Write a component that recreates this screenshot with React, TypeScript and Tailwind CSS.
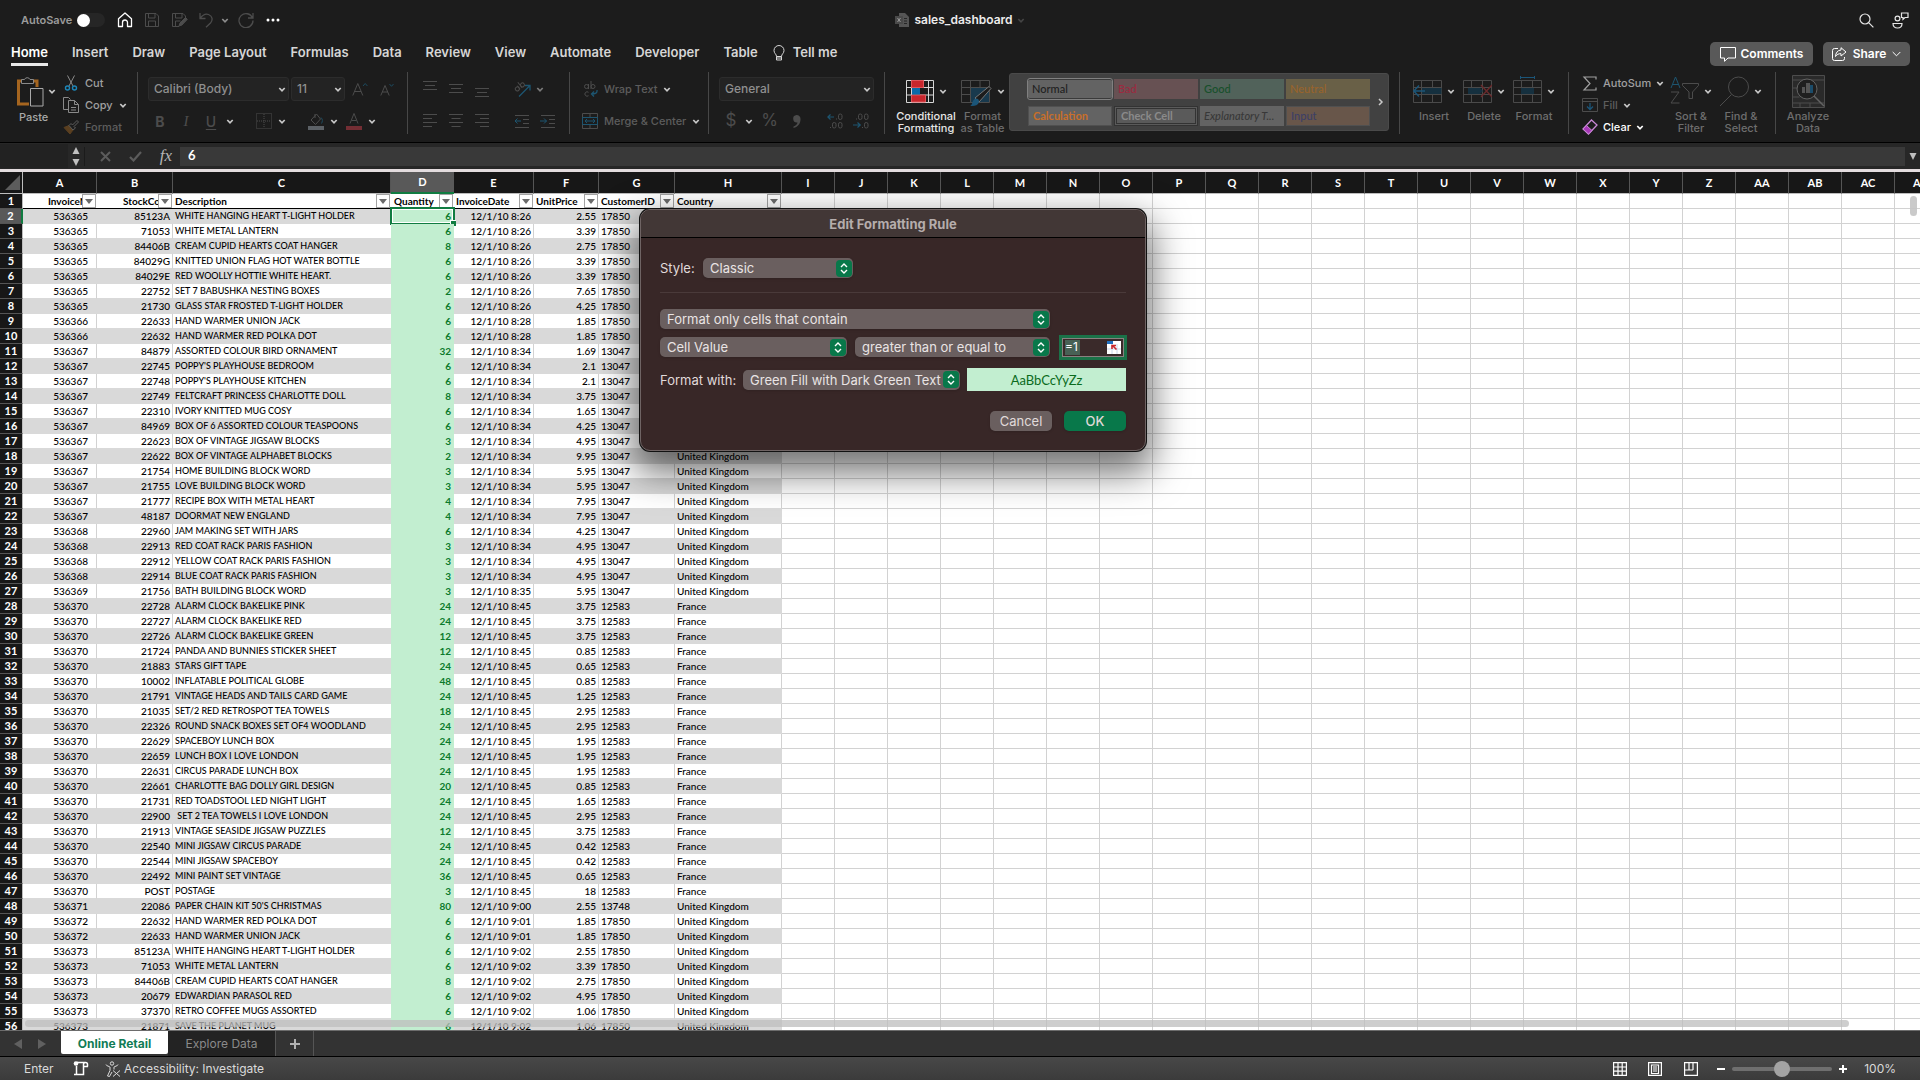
import React from "react";

const UI = "font-['Inter',sans-serif]";

/* ---------- data ---------- */

type Row = [string, string, string, string, string, string, string, string];

const UK = "United Kingdom";
const FR = "France";

const rows: Row[] = [
  ["536365", "85123A", "WHITE HANGING HEART T-LIGHT HOLDER", "6", "12/1/10 8:26", "2.55", "17850", UK],
  ["536365", "71053", "WHITE METAL LANTERN", "6", "12/1/10 8:26", "3.39", "17850", UK],
  ["536365", "84406B", "CREAM CUPID HEARTS COAT HANGER", "8", "12/1/10 8:26", "2.75", "17850", UK],
  ["536365", "84029G", "KNITTED UNION FLAG HOT WATER BOTTLE", "6", "12/1/10 8:26", "3.39", "17850", UK],
  ["536365", "84029E", "RED WOOLLY HOTTIE WHITE HEART.", "6", "12/1/10 8:26", "3.39", "17850", UK],
  ["536365", "22752", "SET 7 BABUSHKA NESTING BOXES", "2", "12/1/10 8:26", "7.65", "17850", UK],
  ["536365", "21730", "GLASS STAR FROSTED T-LIGHT HOLDER", "6", "12/1/10 8:26", "4.25", "17850", UK],
  ["536366", "22633", "HAND WARMER UNION JACK", "6", "12/1/10 8:28", "1.85", "17850", UK],
  ["536366", "22632", "HAND WARMER RED POLKA DOT", "6", "12/1/10 8:28", "1.85", "17850", UK],
  ["536367", "84879", "ASSORTED COLOUR BIRD ORNAMENT", "32", "12/1/10 8:34", "1.69", "13047", UK],
  ["536367", "22745", "POPPY'S PLAYHOUSE BEDROOM", "6", "12/1/10 8:34", "2.1", "13047", UK],
  ["536367", "22748", "POPPY'S PLAYHOUSE KITCHEN", "6", "12/1/10 8:34", "2.1", "13047", UK],
  ["536367", "22749", "FELTCRAFT PRINCESS CHARLOTTE DOLL", "8", "12/1/10 8:34", "3.75", "13047", UK],
  ["536367", "22310", "IVORY KNITTED MUG COSY", "6", "12/1/10 8:34", "1.65", "13047", UK],
  ["536367", "84969", "BOX OF 6 ASSORTED COLOUR TEASPOONS", "6", "12/1/10 8:34", "4.25", "13047", UK],
  ["536367", "22623", "BOX OF VINTAGE JIGSAW BLOCKS", "3", "12/1/10 8:34", "4.95", "13047", UK],
  ["536367", "22622", "BOX OF VINTAGE ALPHABET BLOCKS", "2", "12/1/10 8:34", "9.95", "13047", UK],
  ["536367", "21754", "HOME BUILDING BLOCK WORD", "3", "12/1/10 8:34", "5.95", "13047", UK],
  ["536367", "21755", "LOVE BUILDING BLOCK WORD", "3", "12/1/10 8:34", "5.95", "13047", UK],
  ["536367", "21777", "RECIPE BOX WITH METAL HEART", "4", "12/1/10 8:34", "7.95", "13047", UK],
  ["536367", "48187", "DOORMAT NEW ENGLAND", "4", "12/1/10 8:34", "7.95", "13047", UK],
  ["536368", "22960", "JAM MAKING SET WITH JARS", "6", "12/1/10 8:34", "4.25", "13047", UK],
  ["536368", "22913", "RED COAT RACK PARIS FASHION", "3", "12/1/10 8:34", "4.95", "13047", UK],
  ["536368", "22912", "YELLOW COAT RACK PARIS FASHION", "3", "12/1/10 8:34", "4.95", "13047", UK],
  ["536368", "22914", "BLUE COAT RACK PARIS FASHION", "3", "12/1/10 8:34", "4.95", "13047", UK],
  ["536369", "21756", "BATH BUILDING BLOCK WORD", "3", "12/1/10 8:35", "5.95", "13047", UK],
  ["536370", "22728", "ALARM CLOCK BAKELIKE PINK", "24", "12/1/10 8:45", "3.75", "12583", FR],
  ["536370", "22727", "ALARM CLOCK BAKELIKE RED", "24", "12/1/10 8:45", "3.75", "12583", FR],
  ["536370", "22726", "ALARM CLOCK BAKELIKE GREEN", "12", "12/1/10 8:45", "3.75", "12583", FR],
  ["536370", "21724", "PANDA AND BUNNIES STICKER SHEET", "12", "12/1/10 8:45", "0.85", "12583", FR],
  ["536370", "21883", "STARS GIFT TAPE", "24", "12/1/10 8:45", "0.65", "12583", FR],
  ["536370", "10002", "INFLATABLE POLITICAL GLOBE", "48", "12/1/10 8:45", "0.85", "12583", FR],
  ["536370", "21791", "VINTAGE HEADS AND TAILS CARD GAME", "24", "12/1/10 8:45", "1.25", "12583", FR],
  ["536370", "21035", "SET/2 RED RETROSPOT TEA TOWELS", "18", "12/1/10 8:45", "2.95", "12583", FR],
  ["536370", "22326", "ROUND SNACK BOXES SET OF4 WOODLAND", "24", "12/1/10 8:45", "2.95", "12583", FR],
  ["536370", "22629", "SPACEBOY LUNCH BOX", "24", "12/1/10 8:45", "1.95", "12583", FR],
  ["536370", "22659", "LUNCH BOX I LOVE LONDON", "24", "12/1/10 8:45", "1.95", "12583", FR],
  ["536370", "22631", "CIRCUS PARADE LUNCH BOX", "24", "12/1/10 8:45", "1.95", "12583", FR],
  ["536370", "22661", "CHARLOTTE BAG DOLLY GIRL DESIGN", "20", "12/1/10 8:45", "0.85", "12583", FR],
  ["536370", "21731", "RED TOADSTOOL LED NIGHT LIGHT", "24", "12/1/10 8:45", "1.65", "12583", FR],
  ["536370", "22900", " SET 2 TEA TOWELS I LOVE LONDON", "24", "12/1/10 8:45", "2.95", "12583", FR],
  ["536370", "21913", "VINTAGE SEASIDE JIGSAW PUZZLES", "12", "12/1/10 8:45", "3.75", "12583", FR],
  ["536370", "22540", "MINI JIGSAW CIRCUS PARADE", "24", "12/1/10 8:45", "0.42", "12583", FR],
  ["536370", "22544", "MINI JIGSAW SPACEBOY", "24", "12/1/10 8:45", "0.42", "12583", FR],
  ["536370", "22492", "MINI PAINT SET VINTAGE", "36", "12/1/10 8:45", "0.65", "12583", FR],
  ["536370", "POST", "POSTAGE", "3", "12/1/10 8:45", "18", "12583", FR],
  ["536371", "22086", "PAPER CHAIN KIT 50'S CHRISTMAS", "80", "12/1/10 9:00", "2.55", "13748", UK],
  ["536372", "22632", "HAND WARMER RED POLKA DOT", "6", "12/1/10 9:01", "1.85", "17850", UK],
  ["536372", "22633", "HAND WARMER UNION JACK", "6", "12/1/10 9:01", "1.85", "17850", UK],
  ["536373", "85123A", "WHITE HANGING HEART T-LIGHT HOLDER", "6", "12/1/10 9:02", "2.55", "17850", UK],
  ["536373", "71053", "WHITE METAL LANTERN", "6", "12/1/10 9:02", "3.39", "17850", UK],
  ["536373", "84406B", "CREAM CUPID HEARTS COAT HANGER", "8", "12/1/10 9:02", "2.75", "17850", UK],
  ["536373", "20679", "EDWARDIAN PARASOL RED", "6", "12/1/10 9:02", "4.95", "17850", UK],
  ["536373", "37370", "RETRO COFFEE MUGS ASSORTED", "6", "12/1/10 9:02", "1.06", "17850", UK],
  ["536373", "21871", "SAVE THE PLANET MUG", "6", "12/1/10 9:02", "1.06", "17850", UK],
];

const headers = ["InvoiceNo", "StockCode", "Description", "Quantity", "InvoiceDate", "UnitPrice", "CustomerID", "Country"];
const lettered = ["A", "B", "C", "D", "E", "F", "G", "H"];
const blanks = ["I", "J", "K", "L", "M", "N", "O", "P", "Q", "R", "S", "T", "U", "V", "W", "X", "Y", "Z", "AA", "AB", "AC", "AD"];
const colWidths = ["w-[74px]", "w-[76px]", "w-[218px]", "w-[63px]", "w-[80px]", "w-[65px]", "w-[76px]", "w-[107px]"];
const align = ["text-right pr-[8px]", "text-right pr-[2px]", "text-left pl-[2px] text-[9px]", "text-right pr-[3px]", "text-right pr-[2px]", "text-right pr-[2px]", "text-left pl-[2px]", "text-left pl-[2px]"];
const headAlign = ["text-right pr-[4px]", "text-right pr-[2px]", "text-left pl-[2px]", "text-left pl-[3px]", "text-left pl-[2px]", "text-left pl-[2px]", "text-left pl-[2px]", "text-left pl-[2px]"];

/* ---------- small pieces ---------- */

function Chev({ c = "text-[#c8c8c8]" }: { c?: string }) {
  return (
    <svg className={`h-[7px] w-[8px] shrink-0 ${c}`} viewBox="0 0 8 7" fill="none" stroke="currentColor" strokeWidth="1.7" aria-hidden="true">
      <path d="M1.3 2 4 4.8 6.7 2" />
    </svg>
  );
}

function Icon({ w, h, children, c = "text-[#4c4c4c]" }: { w: number; h: number; children: React.ReactNode; c?: string }) {
  return (
    <svg width={w} height={h} viewBox={`0 0 ${w} ${h}`} className={`shrink-0 ${c}`} fill="none" stroke="currentColor" strokeWidth="1" aria-hidden="true">
      {children}
    </svg>
  );
}

function IB({ label, className = "", children }: { label: string; className?: string; children: React.ReactNode }) {
  return (
    <button type="button" aria-label={label} className={`flex shrink-0 items-center justify-center ${className}`}>
      {children}
    </button>
  );
}

const Divider = () => <span className="h-[18px] w-px shrink-0 bg-[#4f4f4f]" />;

function Lines({ ws, start, align: a }: { ws: number[]; start: number; align: "l" | "c" | "r" }) {
  return (
    <Icon w={14} h={20}>
      {ws.map((w, i) => {
        const x = a === "l" ? 0 : a === "c" ? (14 - w) / 2 : 14 - w;
        return <path key={i} d={`M${x} ${start + i * 4 + 0.5}h${w}`} />;
      })}
    </Icon>
  );
}

/* ---------- title bar ---------- */

function TitleBar() {
  return (
    <header className="grid h-[34px] grid-cols-[1fr_auto_1fr] items-center pt-[6px] text-[12px]">
      <div className="flex items-center pl-[21px]">
        <label className="flex items-center gap-[6px] font-semibold text-[#9b9b9b]">
          <span className="w-[50px] whitespace-nowrap text-[11px]">AutoSave</span>
          <input type="checkbox" role="switch" className="peer sr-only" />
          <span className="flex h-[14px] w-[28px] items-center rounded-full bg-[#262626]">
            <span className="h-[13px] w-[13px] rounded-full bg-white" />
          </span>
        </label>
        <IB label="Home" className="ml-[12px]">
          <Icon w={16} h={16} c="text-white">
            <path strokeWidth="1.3" strokeLinejoin="round" d="M1.5 6.8 8 1l6.500 5.800V14.500H10.500V10.500a2.500 2.500 0 0 0-5 0V14.500H1.500Z" />
          </Icon>
        </IB>
        <IB label="Save" className="ml-[12px]">
          <Icon w={14} h={14}>
            <path d="M.5.5h10.500l2.500 2.500v10.500H.5ZM3.500.5v4.500h6.500V.5M3.500 13.500V8h7v5.500" />
          </Icon>
        </IB>
        <IB label="Save as" className="ml-[13px]">
          <Icon w={16} h={14}>
            <path d="M7 13.500H.5V.5h10.500l2.500 2.500v2M3.500.5v4.500h6.500V.5M3.500 13.500V8h5" />
            <path fill="currentColor" d="m7 13 1-3 5.500-5.500 1.800 1.800L10 12Z" />
          </Icon>
        </IB>
        <IB label="Undo" className="ml-[11px]">
          <Icon w={14} h={16}>
            <path strokeWidth="1.300" d="M1 1v5.500h5.500M1 6.500C4 2.500 7 1.500 9.500 2.500c4 1.600 4.600 5.500 2 8.500L7 15.300" />
          </Icon>
        </IB>
        <IB label="Undo list" className="ml-[8px]"><Chev c="text-[#8c8c8c]" /></IB>
        <IB label="Redo" className="ml-[9px]">
          <Icon w={16} h={16}>
            <path strokeWidth="1.300" d="M14.500 6A7 7 0 1 0 15 8.500M15 1v5h-5" />
          </Icon>
        </IB>
        <IB label="More" className="ml-[12px]">
          <Icon w={14} h={4} c="text-white">
            <g fill="currentColor" stroke="none"><circle cx="2" cy="2" r="1.500" /><circle cx="7" cy="2" r="1.500" /><circle cx="12" cy="2" r="1.500" /></g>
          </Icon>
        </IB>
      </div>
      <div className="flex items-center font-semibold text-[#ececec]">
        <Icon w={14} h={14} c="text-[#555]">
          <path fill="currentColor" stroke="none" d="M4 0h6l4 4v10H4Z" />
          <path stroke="#262626" d="M9 5.500h3M9 8h3M9 10.500h3" />
          <path fill="#4a4a4a" stroke="none" d="M0 3h8v8H0Z" />
          <path stroke="#999" d="m2.500 5 3 4M5.500 5l-3 4" />
        </Icon>
        <h1 className="ml-[5px] text-[12px]">sales_dashboard</h1>
        <IB label="Document menu" className="ml-[4px]"><Chev c="text-[#444]" /></IB>
      </div>
      <div className="flex items-center justify-end gap-[18px] pr-[11px]">
        <IB label="Search">
          <Icon w={15} h={15} c="text-[#e6e6e6]"><circle cx="6" cy="6" r="5" strokeWidth="1.200" /><path strokeWidth="1.200" d="m9.600 9.600 4.800 4.800" /></Icon>
        </IB>
        <IB label="Presence">
          <Icon w={17} h={17} c="text-[#e6e6e6]">
            <circle cx="5.500" cy="6.500" r="2.400" strokeWidth="1.200" />
            <path strokeWidth="1.200" d="M1 11.500h9c0 3-1.700 4.500-4.500 4.500S1 14.500 1 11.500ZM9.500 1h6.500v4.500h-3l-2 1.800V5.500H9.500Z" />
          </Icon>
        </IB>
      </div>
    </header>
  );
}

/* ---------- ribbon tabs ---------- */

const tabs = ["Home", "Insert", "Draw", "Page Layout", "Formulas", "Data", "Review", "View", "Automate", "Developer", "Table"];

function Tabs() {
  return (
    <nav aria-label="Ribbon tabs" className="flex h-[36px] items-center pr-[10px] pl-[11px] text-[13px] font-semibold text-[#d6d6d6]">
      <div className="flex gap-[24px]">
        {tabs.map((t, i) => (
          <button type="button" key={t} className={i === 0 ? "h-[27px] border-b-[3px] border-[#e8e8e8] pt-[4px] text-white" : "h-[27px] border-b-[3px] border-transparent pt-[4px]"}>
            {t}
          </button>
        ))}
      </div>
      <button type="button" className="ml-[15px] flex items-center gap-[8px] pt-[2px]">
        <Icon w={12} h={16} c="text-[#d6d6d6]">
          <path d="M3.500 11.500C3.500 9 1 8.500 1 5.500a5 5 0 0 1 10 0c0 3-2.500 3.500-2.500 6ZM3.500 11.500V15h5v-3.500M3.500 13h5" />
        </Icon>
        Tell me
      </button>
      <div className="ml-auto flex gap-[10px] pt-[4px] text-[12px] text-white">
        <button type="button" className="flex h-[24px] w-[103px] items-center justify-center gap-[5px] rounded-[5px] bg-[#595959]">
          <Icon w={16} h={15} c="text-white"><path d="M.5.500h15v10.500H8L4.500 14.300V11H.5Z" /></Icon>
          Comments
        </button>
        <button type="button" className="flex h-[24px] w-[87px] items-center justify-center gap-[6px] rounded-[5px] bg-[#595959]">
          <Icon w={15} h={14} c="text-white"><path d="M6 1.500H2.500A2 2 0 0 0 .5 3.500v8a2 2 0 0 0 2 2h8a2 2 0 0 0 2-2V10M9 .7l5 4.300-5 4V6.700C6.500 6.500 5 7.500 3.500 9.500 3.700 6 5.500 3.200 9 3Z" /></Icon>
          Share
          <Icon w={9} h={6} c="text-white"><path d="m.7 1 3.800 3.800L8.300 1" /></Icon>
        </button>
      </div>
    </nav>
  );
}

/* ---------- ribbon ---------- */

function Big({ label, width, tone = "text-[#6e6e6e]", chev = true, children }: { label: string[]; width: string; tone?: string; chev?: boolean; children: React.ReactNode }) {
  return (
    <button type="button" className={`flex shrink-0 flex-col items-center text-[11px] leading-[12px] font-medium ${tone} ${width}`}>
      <span className="flex h-[38px] items-center gap-[5px]">
        {children}
        {chev && <Chev />}
      </span>
      {label.map((l) => <span key={l} className="whitespace-nowrap">{l}</span>)}
    </button>
  );
}

function Picker({ label, value, width }: { label: string; value: string; width: string }) {
  return (
    <span className={`relative flex h-[24px] items-center ${width}`}>
      <select aria-label={label} className="h-full w-full appearance-none rounded-[3px] border border-[#2c2c2c] bg-[#232323] pl-[5px] text-[12px] font-medium text-[#8f8f8f]" defaultValue={value}>
        <option>{value}</option>
      </select>
      <span className="pointer-events-none absolute right-[3px]"><Chev /></span>
    </span>
  );
}

function GridPic({ children }: { children?: React.ReactNode }) {
  return (
    <Icon w={29} h={30} c="text-[#4a4a4a]">
      <path d="M.5 4.500h28v22H.5ZM.5 11.500h28M.5 18.500h28M8.500 4.500v22M19.500 4.500v22" />
      {children}
    </Icon>
  );
}

const GROUP = "h-[62px] shrink-0 border-r border-[#474747]";

function StyleTile({ children, className }: { children: string; className: string }) {
  return <button type="button" className={`h-[20px] w-[84px] overflow-hidden pl-[4px] text-left leading-[14px] whitespace-nowrap font-['Lato',sans-serif] text-[11px] ${className}`}>{children}</button>;
}

function Ribbon() {
  return (
    <section aria-label="Home ribbon" className="flex h-[73px] overflow-hidden border-b border-black pt-[2px] text-[11px] font-medium">
      {/* clipboard */}
      <div className={`${GROUP} flex w-[138px]`}>
        <button type="button" className="ml-[16px] flex w-[40px] flex-col items-start text-[#a9a9a9]">
          <span className="flex h-[39px] items-center gap-[4px]">
            <Icon w={28} h={31} c="text-[#8a8a8a]">
              <path stroke="#a5651f" strokeWidth="3" d="M7 5H2.500V28H13M16 5h5v6" />
              <path fill="#1c1c1c" d="M5.500 7.500v-4h3a3 3 0 0 1 5.500 0h3.500v4Z" />
              <path fill="#1c1c1c" stroke="#a9a9a9" d="M14.500 12.500h12.500v17.500H14.500Z" />
            </Icon>
            <Chev />
          </span>
          <span className="pl-[3px] leading-[12px]">Paste</span>
        </button>
        <div className="ml-[7px] flex flex-col text-[#a0a0a0]">
          <button type="button" className="flex h-[22px] shrink-0 items-center gap-[6px]">
            <Icon w={16} h={16} c="text-[#8a8a8a]">
              <path d="m4.500.500 5.500 10.500M11.500.500 6 11" />
              <g stroke="#1d86b8" strokeWidth="1.400"><circle cx="4.500" cy="13" r="2" /><circle cx="11.500" cy="13" r="2" /></g>
            </Icon>
            Cut
          </button>
          <button type="button" className="flex h-[22px] shrink-0 items-center gap-[6px]">
            <Icon w={16} h={16} c="text-[#8a8a8a]">
              <path d="M5 12.500H.5V.500h5l2 2M5.500 3.500h6l4 4v8H5.500ZM11.500 3.500v4h4M8 10.500h5M8 13h5" />
            </Icon>
            Copy
            <Chev />
          </button>
          <button type="button" className="flex h-[22px] shrink-0 items-center gap-[6px] text-[#5e5e5e]">
            <Icon w={16} h={16} c="text-[#5e5e5e]">
              <path fill="#5a3f20" stroke="#5a3f20" d="m1 8.500 5-2 4 4.500-3 4Z" />
              <path fill="#1c1c1c" d="m6 6.500 2-2 1.500 1.500L14 1.500 15.500 3 11 7.500l1.500 1.500-2.500 2Z" />
            </Icon>
            Format
          </button>
        </div>
      </div>

      {/* font */}
      <div className={`${GROUP} flex w-[270px] flex-col gap-[8px] pt-[5px] pl-[10px]`}>
        <div className="flex items-center">
          <Picker label="Font" value="Calibri (Body)" width="w-[141px]" />
          <span className="ml-[2px]"><Picker label="Font size" value="11" width="w-[54px]" /></span>
          <IB label="Increase font size" className="ml-[7px]"><Icon w={16} h={15}><path d="m.8 13.500 5-12 5 12M2.500 9.500h6.600" /><path stroke="#1d4a5e" d="m11 4 2.200-2.500L15.400 4" /></Icon></IB>
          <IB label="Decrease font size" className="ml-[12px]"><Icon w={14} h={15}><path d="m.8 13.500 4.200-10 4.200 10M2.200 10h5.600" /><path stroke="#1d4a5e" d="M9.500 2 11.500 4.300 13.500 2" /></Icon></IB>
        </div>
        <div className="flex h-[24px] items-center text-[14px] text-[#4c4c4c]">
          <IB label="Bold" className="ml-[4px] w-[16px] font-bold">B</IB>
          <IB label="Italic" className="ml-[10px] w-[16px] font-['Liberation_Serif',serif] text-[15px] italic">I</IB>
          <IB label="Underline" className="ml-[9px] w-[16px] underline underline-offset-2">U</IB>
          <IB label="Underline style" className="ml-[7px]"><Chev /></IB>
          <span className="ml-[10px]"><Divider /></span>
          <IB label="Borders" className="ml-[12px]"><Icon w={16} h={16}><path strokeDasharray="1 1" d="M.5.500h15v15H.5ZM8 1v14M1 8h14" /></Icon></IB>
          <IB label="Border style" className="ml-[6px]"><Chev /></IB>
          <span className="ml-[10px]"><Divider /></span>
          <IB label="Fill color" className="ml-[12px]">
            <Icon w={16} h={17}><path d="M4 6 8.500 1l4 5-5 5.500L3 7ZM7 1v4" /><path stroke="#1d4a5e" d="M13 4.500c2 2 1.500 4 .5 6" /><path fill="#5c6166" stroke="none" d="M0 13h16v4H0Z" /></Icon>
          </IB>
          <IB label="Fill color list" className="ml-[6px]"><Chev /></IB>
          <IB label="Font color" className="ml-[8px]">
            <Icon w={16} h={17}><path d="M4 10.500 8 .5l4 10M5.500 7.500h5" /><path fill="#742e34" stroke="none" d="M0 13h16v4H0Z" /></Icon>
          </IB>
          <IB label="Font color list" className="ml-[6px]"><Chev /></IB>
        </div>
      </div>

      {/* alignment */}
      <div className={`${GROUP} flex w-[162px] flex-col gap-[8px] pt-[5px] pl-[15px]`}>
        <div className="flex h-[24px] items-center">
          <IB label="Top align"><Lines ws={[14, 10, 14]} start={2} align="c" /></IB>
          <IB label="Middle align" className="ml-[12px]"><Lines ws={[14, 10, 14]} start={5} align="c" /></IB>
          <IB label="Bottom align" className="ml-[12px]"><Lines ws={[14, 10, 14]} start={9} align="c" /></IB>
          <span className="ml-[13px]"><Divider /></span>
          <IB label="Orientation" className="ml-[12px]">
            <Icon w={17} h={16}>
              <g transform="rotate(-38 5 6)"><circle cx="2.500" cy="6.500" r="2" /><path d="M4.500 4v4.500M7 1.500v7" /><circle cx="9" cy="6.500" r="2" /></g>
              <path stroke="#1d5570" strokeWidth="1.300" d="M5 15.500 15.500 5M11 4.500h5v5" />
            </Icon>
          </IB>
          <IB label="Orientation list" className="ml-[5px]"><Chev c="text-[#7a7a7a]" /></IB>
        </div>
        <div className="flex h-[24px] items-center">
          <IB label="Align left"><Lines ws={[14, 9, 14, 9]} start={3} align="l" /></IB>
          <IB label="Center" className="ml-[12px]"><Lines ws={[14, 9, 14, 9]} start={3} align="c" /></IB>
          <IB label="Align right" className="ml-[12px]"><Lines ws={[14, 9, 14, 9]} start={3} align="r" /></IB>
          <span className="ml-[13px]"><Divider /></span>
          <IB label="Decrease indent" className="ml-[12px]">
            <Icon w={16} h={14}><path d="M1 1.500h14M9 5.500h6M9 9.500h6M1 13.500h14" /><path stroke="#1d5570" d="M7 7H1M3.500 4.500 1 7l2.500 2.500" /></Icon>
          </IB>
          <IB label="Increase indent" className="ml-[10px]">
            <Icon w={16} h={14}><path d="M1 1.500h14M9 5.500h6M9 9.500h6M1 13.500h14" /><path stroke="#1d5570" d="M0 7h6.500M4 4.500 6.500 7 4 9.500" /></Icon>
          </IB>
        </div>
      </div>

      {/* wrap / merge */}
      <div className={`${GROUP} flex w-[139px] flex-col gap-[8px] pt-[5px] pl-[12px] text-[#5c5c5c]`}>
        <button type="button" className="flex h-[24px] items-center gap-[6px]">
          <Icon w={16} h={17}>
            <circle cx="4.500" cy="5.500" r="2" /><path d="M6.500 3v5M9 0v8" /><circle cx="11" cy="5.500" r="2" />
            <path d="M6.500 11.300a2.200 2.200 0 1 0 0 3.400" />
            <path stroke="#1d5570" strokeWidth="1.300" d="M15 9c.5 3-1.500 4-5.500 4M12 10.500 9.500 13l2.500 2.500" />
          </Icon>
          Wrap Text <Chev />
        </button>
        <button type="button" className="flex h-[24px] items-center gap-[6px] whitespace-nowrap">
          <Icon w={16} h={16}>
            <path d="M.5.500h15v15H.5ZM8 .5v4M8 11.500v4" />
            <path stroke="#1d5570" d="M.5 4.500h15v7H.5ZM3 8h10M5 6 3 8l2 2M11 6l2 2-2 2" />
          </Icon>
          Merge &amp; Center <Chev />
        </button>
      </div>

      {/* number */}
      <div className={`${GROUP} flex w-[176px] flex-col gap-[8px] pt-[5px] pl-[10px]`}>
        <Picker label="Number format" value="General" width="w-[155px]" />
        <div className="flex h-[24px] items-center text-[17px] font-normal text-[#4c4c4c]">
          <IB label="Currency" className="ml-[5px] w-[14px]">$</IB>
          <IB label="Currency list" className="ml-[7px]"><Chev /></IB>
          <IB label="Percent" className="ml-[8px] w-[17px]">%</IB>
          <IB label="Comma" className="ml-[14px]"><Icon w={9} h={13}><path fill="currentColor" stroke="none" d="M4.500 0a4 4 0 0 1 4 4.500C8.500 9 5.500 12 1.500 13v-1.500C4 10.500 5.300 9.300 5.500 7.500A3.700 3.700 0 1 1 4.500 0Z" /></Icon></IB>
          <span className="ml-[14px]"><Divider /></span>
          <IB label="Increase decimal" className="ml-[12px]">
            <Icon w={16} h={16}>
              <rect x="11.500" y="1" width="3.500" height="5.500" rx="1.700" /><rect x="5.500" y="9.500" width="3.500" height="5.500" rx="1.700" /><rect x="11.500" y="9.500" width="3.500" height="5.500" rx="1.700" />
              <path d="M9 6h1M3 14.500h1" />
              <path stroke="#1d5570" strokeWidth="1.200" d="M7 4H.5M3.500 1.500.8 4l2.700 2.500" />
            </Icon>
          </IB>
          <IB label="Decrease decimal" className="ml-[10px]">
            <Icon w={16} h={16}>
              <rect x="5.500" y="1" width="3.500" height="5.500" rx="1.700" /><rect x="11.500" y="1" width="3.500" height="5.500" rx="1.700" /><rect x="11.500" y="9.500" width="3.500" height="5.500" rx="1.700" />
              <path d="M3 6h1M9 14.500h1" />
              <path stroke="#1d5570" strokeWidth="1.200" d="M0 12h7M4.500 9.500 7.200 12l-2.700 2.500" />
            </Icon>
          </IB>
        </div>
      </div>

      {/* styles */}
      <div className={`${GROUP} flex w-[515px]`}>
        <span className="ml-[11px]">
          <Big label={["Conditional", "Formatting"]} width="w-[60px]" tone="text-[#e6e6e6]">
            <Icon w={28} h={23} c="text-[#d6d6d6]">
              <path d="M.5.500h27v22H.5ZM.5 7.500h27M.5 15h27M5.500.500v22M22.500.500v22" />
              <path fill="#c8262c" stroke="#e0555a" d="M5.500.500h12v7h-12ZM5.500 15h14v7h-14Z" />
              <path fill="#0a6aa8" stroke="none" d="M6 8h8v6.500H6Z" />
            </Icon>
          </Big>
        </span>
        <Big label={["Format", "as Table"]} width="w-[53px]">
          <Icon w={31} h={30}>
            <path d="M.5 4.500h28v22H.5ZM.5 11.500h28M.5 18.500h28M9.500 4.500v22M19 4.500v22" />
            <path fill="#18394d" stroke="none" d="M10 12h18v14H10Z" />
            <path fill="#1c1c1c" stroke="#777" d="m14 22 14-11.500 2 2L18 26Z" />
            <path fill="#1b5578" stroke="none" d="M9 30c3-1 2-7 6-7.500 3 0 4 3 2 5.500-2 2-5 2-8 2Z" />
          </Icon>
        </Big>
        <div className="mt-[1px] flex h-[58px] w-[380px] items-center rounded-[3px] border border-[#4a4a4a] bg-[#414141] pl-[18px]">
          <div className="grid grid-cols-[repeat(4,84px)] gap-x-[2px] gap-y-[7px]">
            <StyleTile className="rounded-[2px] border-y border-[#3a3a3a] bg-[#636363] text-[#1f1f1f] outline outline-[#808080]">Normal</StyleTile>
            <StyleTile className="bg-[#675153] font-medium text-[#9c2a40]">Bad</StyleTile>
            <StyleTile className="bg-[#51625a] font-medium text-[#17502b]">Good</StyleTile>
            <StyleTile className="bg-[#696047] font-medium text-[#99642c]">Neutral</StyleTile>
            <StyleTile className="border border-[#505050] bg-[#636363] font-bold text-[#c96f2a]">Calculation</StyleTile>
            <StyleTile className="border-3 border-double border-[#333] bg-[#5a5a5a] pl-[1px] font-bold text-[#8a8a8a]">Check Cell</StyleTile>
            <StyleTile className="bg-[#636363] text-[#383838] italic">Explanatory T...</StyleTile>
            <StyleTile className="border border-[#505050] bg-[#68564a] font-medium text-[#3c3f66]">Input</StyleTile>
          </div>
          <IB label="More styles" className="ml-[8px]"><Icon w={6} h={8} c="text-[#c8c8c8]"><path strokeWidth="1.500" d="m1 1 3 3-3 3" /></Icon></IB>
        </div>
      </div>

      {/* cells */}
      <div className={`${GROUP} flex w-[169px] pl-[9px]`}>
        <Big label={["Insert"]} width="w-[50px]">
          <GridPic>
            <path fill="#15303f" stroke="none" d="M9 12h19.500v6H9Z" />
            <path stroke="#1b5578" strokeWidth="1.500" d="M12 15H1M6 9.500.8 15 6 20.500" />
          </GridPic>
        </Big>
        <Big label={["Delete"]} width="w-[50px]">
          <GridPic>
            <path fill="#15303f" stroke="none" d="M5 12h12l3 3-3 3H5Z" />
            <path stroke="#6c2a2c" strokeWidth="1.300" d="m18 9 11 12M29 9 18 21" />
          </GridPic>
        </Big>
        <Big label={["Format"]} width="w-[50px]">
          <GridPic>
            <path fill="#15303f" stroke="none" d="M8 12h13v6H8Z" />
            <path stroke="#1b5578" d="M7 1.500h15M7.500 0v3M21.500 0v3" />
          </GridPic>
        </Big>
      </div>

      {/* editing */}
      <div className={`${GROUP} flex w-[207px] pl-[13px]`}>
        <div className="flex w-[84px] shrink-0 flex-col text-[#a0a0a0]">
          <button type="button" className="flex h-[22px] shrink-0 items-center gap-[5px]">
            <Icon w={16} h={15} c="text-[#a0a0a0]"><path strokeWidth="1.200" d="M14 3.500V1H2l6 6.500L2 14h12v-2.500" /></Icon>
            AutoSum <Chev />
          </button>
          <button type="button" className="flex h-[22px] shrink-0 items-center gap-[5px] text-[#5e5e5e]">
            <Icon w={16} h={14}><path d="M.5.500h15v13H.5ZM.5 3.500h15" /><path stroke="#1b5578" strokeWidth="1.300" d="M8 5v6M5 8.500 8 11.500l3-3" /></Icon>
            Fill <Chev />
          </button>
          <button type="button" className="flex h-[22px] shrink-0 items-center gap-[5px] text-white">
            <Icon w={16} h={16} c="text-[#c988d6]"><path fill="#1c1c1c" strokeWidth="1.300" d="M9.500 1 15 6 6.500 15 1 10Z" /><path fill="#a838b8" d="m4.500 6.500 5.500 5-3.500 3.500L1 10Z" /></Icon>
            Clear <Chev c="text-white" />
          </button>
        </div>
        <Big label={["Sort &", "Filter"]} width="w-[50px]">
          <Icon w={29} h={30}>
            <path stroke="#1d5570" d="m1 12 4.500-11 4.500 11M2.500 8.500h6" />
            <path d="M1 16h8L1 27h8.500M12.500 7.500h16v2l-6 6.500v6.500h-3.500V16l-6.500-6.500Z" />
          </Icon>
        </Big>
        <Big label={["Find &", "Select"]} width="w-[50px]">
          <Icon w={29} h={30}><circle cx="18.500" cy="11" r="10" /><path d="M11.500 18.500 0 30" /></Icon>
        </Big>
      </div>

      <div className="pl-[7px]">
        <Big label={["Analyze", "Data"]} width="w-[50px]" chev={false}>
          <Icon w={33} h={33}>
            <path fill="#2a2a2a" d="M.5.500h32v32H.5Z" />
            <path d="M.5 5h32M.5 13h6M.5 22h7M.5 28h32M8 28v5M18 28v5" />
            <circle cx="15" cy="14" r="10" fill="#1f1f1f" stroke="#636363" />
            <path stroke="#636363" strokeWidth="1.500" d="m22 21 10 10" />
            <path fill="#555" stroke="none" d="M10 12h3v6h-3ZM14 8h4v10h-4Z" />
            <path fill="#1b4c6a" stroke="none" d="M18 10h3v8h-3Z" />
          </Icon>
        </Big>
      </div>
    </section>
  );
}

/* ---------- formula bar ---------- */

function FormulaBar() {
  return (
    <div className="flex h-[29px] items-center border-b-[3px] border-[#e3dcde] bg-[#272727]">
      <input aria-label="Name box" className="h-[24px] w-[68px] bg-[#222] outline-none" />
      <span className="flex w-[17px] flex-col items-center gap-[5px] border-r border-[#1b1b1b]">
        <Icon w={8} h={7} c="text-[#c0c0c0]"><path fill="currentColor" stroke="none" d="M4 0 7.500 7h-7Z" /></Icon>
        <Icon w={8} h={7} c="text-[#c0c0c0]"><path fill="currentColor" stroke="none" d="M4 7 7.500 0h-7Z" /></Icon>
      </span>
      <IB label="Cancel entry" className="ml-[15px]"><Icon w={11} h={11} c="text-[#5c5c5c]"><path strokeWidth="2" d="m1 1 9 9M10 1l-9 9" /></Icon></IB>
      <IB label="Confirm entry" className="ml-[18px]"><Icon w={13} h={11} c="text-[#5c5c5c]"><path strokeWidth="2.200" d="m1 6 3.500 3.500L12 1" /></Icon></IB>
      <IB label="Insert function" className="ml-[15px] w-[18px] font-['Liberation_Serif',serif] text-[17px] leading-[20px] text-[#b5b5b5] italic">fx</IB>
      <input aria-label="Formula" defaultValue="6" className="ml-[5px] h-[19px] min-w-0 flex-1 bg-[#393939] pl-[8px] font-['Lato',sans-serif] text-[13px] font-bold text-white outline-none" />
      <IB label="Expand formula bar" className="w-[15px]"><Icon w={8} h={7} c="text-[#c0c0c0]"><path fill="currentColor" stroke="none" d="M4 7 7.500 0h-7Z" /></Icon></IB>
    </div>
  );
}

/* ---------- sheet ---------- */

function Sheet() {
  return (
    <div className="relative min-h-0 flex-1 overflow-hidden bg-white font-['Lato',sans-serif]">
      <table className="w-[1948px] table-fixed border-separate border-spacing-0 text-[10px] leading-[14px] font-medium text-black">
        <colgroup>
          <col className="w-[23px]" />
          {colWidths.map((w, i) => <col key={i} className={w} />)}
          {blanks.map((b) => <col key={b} className="w-[53px]" />)}
        </colgroup>
        <thead>
          <tr className="h-[22px] bg-[#171717] text-[11px] text-white">
            <th className="border-r border-b border-[#bdbdbd] p-0">
              <svg className="ml-[5px] h-[15px] w-[15px]" viewBox="0 0 15 15" aria-hidden="true"><path fill="#5c5c5c" d="M15 0v15H0Z" /></svg>
            </th>
            {[...lettered, ...blanks].map((l) => (
              <th key={l} scope="col" className={l === "D" ? "border-b-2 border-[#107c41] bg-[#595959] p-0" : "border-r border-b border-r-[#555] border-b-[#bdbdbd] p-0"}>
                {l}
              </th>
            ))}
          </tr>
        </thead>
        <tbody>
          <tr className="h-[15px]">
            <th scope="row" className="border-r border-b border-r-[#bdbdbd] border-b-[#555] bg-[#171717] p-0 text-[11px] text-white">1</th>
            {headers.map((h, i) => (
              <th key={h} className={`relative overflow-hidden border-b border-black bg-white p-0 whitespace-nowrap ${headAlign[i]}`}>
                {h}
                <button type="button" aria-label={`Filter ${h}`} className="absolute top-0 right-px flex h-[14px] w-[14px] items-center justify-center border border-[#a3a3a3] bg-white">
                  <svg className="h-[5px] w-[8px]" viewBox="0 0 8 5" aria-hidden="true"><path fill="#6b6b6b" d="M0 0h8L4 5Z" /></svg>
                </button>
              </th>
            ))}
            {blanks.map((b) => <td key={b} className="border-r border-b border-[#d2d2d2] p-0" />)}
          </tr>
          {rows.map((r, n) => {
            const shade = n % 2 === 0;
            return (
              <tr key={n} className="h-[15px]">
                <th scope="row" className={n === 0 ? "border-r-2 border-b border-r-[#107c41] border-b-[#555] bg-[#595959] p-0 text-[11px] text-white" : "border-r border-b border-r-[#bdbdbd] border-b-[#555] bg-[#171717] p-0 text-[11px] text-white"}>
                  {n + 2}
                </th>
                {r.map((v, i) => {
                  if (i === 3)
                    return (
                      <td key={i} className="relative border-b border-[#c2eed0] bg-[#c2eed0] p-0 pr-[3px] text-right font-bold text-[#0b7a2b]">
                        {v}
                        {n === 0 && (
                          <span className="absolute -top-[2px] -right-px -bottom-[2px] -left-px border-2 border-[#107c41] inset-ring inset-ring-white">
                            <span className="absolute -right-[3px] -bottom-[3px] h-[6px] w-[6px] border-t border-l border-white bg-[#107c41]" />
                          </span>
                        )}
                      </td>
                    );
                  return (
                    <td key={i} className={`overflow-hidden border-b border-b-[#d9d9d9] p-0 whitespace-pre ${align[i]} ${shade ? "bg-[#d9d9d9]" : "bg-white"} ${i === 2 ? "" : shade ? "border-r border-r-[#d9d9d9]" : "border-r border-r-[#d2d2d2]"}`}>
                      {v}
                    </td>
                  );
                })}
                {blanks.map((b) => <td key={b} className="border-r border-b border-[#d2d2d2] p-0" />)}
              </tr>
            );
          })}
        </tbody>
      </table>
      <div className="absolute top-[24px] right-[3px] h-[20px] w-[7px] rounded-full bg-[#c4c4c4]/90" />
      <div className="absolute right-[71px] bottom-[3px] left-[25px] h-[7px] rounded-full bg-[#bdbdbd]/75" />
      <Dialog />
    </div>
  );
}

/* ---------- dialog ---------- */

function Pop({ label, value, className }: { label: string; value: string; className: string }) {
  return (
    <span className={`relative flex h-[20px] items-center ${className}`}>
      <select aria-label={label} defaultValue={value} className="h-full w-full appearance-none rounded-[5px] bg-[#6a5f5f] pl-[7px] text-[13px] leading-[18px] text-[#e9e4e4] shadow-sm">
        <option>{value}</option>
      </select>
      <span className="pointer-events-none absolute right-[1px] flex h-[17px] w-[16px] items-center justify-center rounded-[4px] bg-[#08784a]">
        <svg className="h-[11px] w-[8px]" viewBox="0 0 8 11" fill="none" stroke="white" strokeWidth="1.400" aria-hidden="true"><path d="M1 4 4 1l3 3M1 7l3 3 3-3" /></svg>
      </span>
    </span>
  );
}

function Dialog() {
  return (
    <div role="dialog" aria-label="Edit Formatting Rule" className={`absolute top-[37px] left-[640px] w-[506px] rounded-[10px] border border-[#6f6464] bg-[#382727] text-[13px] leading-[18px] text-[#e0dada] shadow-[0_0_0_1px_#111,0_16px_36px_6px_rgba(0,0,0,0.55)] ${UI}`}>
      <h2 className="flex h-[28px] items-center justify-center rounded-t-[9px] border-b border-black bg-[#423736] text-[13px] font-bold text-[#b5adac]">Edit Formatting Rule</h2>
      <div className="flex flex-col px-[19px] pt-[20px] pb-[19px]">
        <div className="flex items-center gap-[9px]">
          <span className="w-[34px] whitespace-nowrap">Style:</span>
          <Pop label="Style" value="Classic" className="w-[150px]" />
        </div>
        <hr className="mt-[14px] mb-[16px] border-[#4a3a3a]" />
        <Pop label="Rule type" value="Format only cells that contain" className="w-[390px]" />
        <div className="mt-[6px] flex h-[24px] items-center">
          <Pop label="Value kind" value="Cell Value" className="w-[187px]" />
          <Pop label="Comparison" value="greater than or equal to" className="ml-[8px] w-[195px]" />
          <span className="ml-[12px] flex h-[19px] w-[62px] items-center border border-[#8a8080] bg-[#3a2a2a] outline-[3px] outline-[#1a7248]">
            <span className="flex w-full items-center px-[2px]">
              <input aria-label="Value" defaultValue="=1" className="h-[15px] w-[15px] bg-[#486155] text-[12px] text-white outline-none" />
              <IB label="Pick range" className="ml-auto">
                <Icon w={14} h={13}>
                  <path fill="#fff" stroke="none" d="M0 0h14v13H0Z" />
                  <path fill="#1f6fc0" stroke="none" d="M0 0h6v3H0Z" />
                  <path stroke="#c9d6ea" d="M5 3v10M0 8h14M10 3v10" />
                  <path stroke="#c8262c" strokeWidth="1.600" d="m5.500 4.500 4 4M5 8V4.500h4" />
                </Icon>
              </IB>
            </span>
          </span>
        </div>
        <div className="mt-[9px] flex h-[23px] items-center">
          <span className="w-[83px] whitespace-nowrap">Format with:</span>
          <Pop label="Format with" value="Green Fill with Dark Green Text" className="w-[217px]" />
          <span className="ml-[7px] flex h-[23px] min-w-0 flex-1 items-center justify-center bg-[#c2eed0] font-['Lato',sans-serif] text-[13px] text-[#0b6b1d]">AaBbCcYyZz</span>
        </div>
        <div className="mt-[20px] flex justify-end gap-[12px]">
          <button type="button" className="h-[20px] w-[62px] rounded-[5px] bg-[#6a5f5f] shadow-sm">Cancel</button>
          <button type="button" className="h-[20px] w-[62px] rounded-[5px] bg-[#08784a] font-medium shadow-sm">OK</button>
        </div>
      </div>
    </div>
  );
}

/* ---------- footer ---------- */

function SheetTabs() {
  return (
    <div className="flex h-[27px] items-start border-t border-b border-t-[#6c6c6c] border-b-black bg-[#333] text-[12px]">
      <div className="flex h-[25px] w-[61px] items-center gap-[16px] pl-[14px]">
        <IB label="Previous sheet"><Icon w={8} h={10} c="text-[#606060]"><path fill="currentColor" stroke="none" d="M8 0v10L0 5Z" /></Icon></IB>
        <IB label="Next sheet"><Icon w={8} h={10} c="text-[#606060]"><path fill="currentColor" stroke="none" d="M0 0v10l8-5Z" /></Icon></IB>
      </div>
      <button type="button" className="h-[23px] w-[107px] rounded-b-[2px] bg-white pt-[2px] font-bold text-[#107c56]">Online Retail</button>
      <button type="button" className="h-[25px] w-[108px] border-r border-[#555] bg-[#232323] text-[#8a8a8a]">Explore Data</button>
      <IB label="Add sheet" className="h-[25px] w-[38px] border-r border-[#555]"><Icon w={10} h={10} c="text-[#b0b0b0]"><path strokeWidth="2" d="M5 0v10M0 5h10" /></Icon></IB>
    </div>
  );
}

function StatusBar() {
  return (
    <footer className="flex h-[23px] items-center bg-gradient-to-b from-[#484848] to-[#3b3b3b] pr-[24px] pl-[24px] text-[12px] text-[#dadada]">
      <span className="w-[49px]">Enter</span>
      <IB label="Record macro">
        <Icon w={16} h={15} c="text-white"><path strokeWidth="1.500" d="M3.500 5v8.500M1 13.500h9.500V3.500a2 2 0 0 1 4 0v2M4 1.500h8.500M11 5.500h4" /><circle cx="3" cy="2.500" r="2.300" fill="currentColor" stroke="none" /></Icon>
      </IB>
      <button type="button" className="ml-[16px] flex items-center gap-[3px]">
        <Icon w={16} h={16} c="text-[#dadada]"><circle cx="7" cy="2.500" r="1.700" /><path d="M1 3.500c0 1.500 4 2 4 2.500v3.500L2.500 15l2 .5L7 11M13 3.500c0 1.500-4 2-4 2.500v2.500M8 9.500l7 6M15 9.500l-7 6" /></Icon>
        Accessibility: Investigate
      </button>
      <div className="ml-auto flex items-center">
        <IB label="Normal view"><Icon w={14} h={14} c="text-white"><path strokeWidth="1.200" d="M.6.600h12.800v12.800H.6ZM5 .6v12.800M9.200.600v12.800M.6 5h12.800M.6 9.200h12.800" /></Icon></IB>
        <IB label="Page layout view" className="ml-[21px]"><Icon w={14} h={14} c="text-white"><path strokeWidth="1.200" d="M.6.600h12.800v12.800H.6ZM3.500 3h7v8.500h-7ZM5 5h4M5 7h4M5 9h4" /></Icon></IB>
        <IB label="Page break view" className="ml-[22px]"><Icon w={14} h={14} c="text-white"><path strokeWidth="1.200" d="M.6.600h12.800v12.800H.6ZM5 .6V8M9 .6V8M.6 8H9" /></Icon></IB>
        <IB label="Zoom out" className="ml-[19px]"><Icon w={8} h={10} c="text-white"><path strokeWidth="2" d="M0 5h8" /></Icon></IB>
        <input
          type="range"
          aria-label="Zoom"
          defaultValue={50}
          className="mx-[7px] h-[16px] w-[100px] appearance-none bg-transparent [&::-webkit-slider-runnable-track]:h-[4px] [&::-webkit-slider-runnable-track]:rounded-full [&::-webkit-slider-runnable-track]:bg-[#6f6f6f] [&::-webkit-slider-thumb]:-mt-[6px] [&::-webkit-slider-thumb]:h-[16px] [&::-webkit-slider-thumb]:w-[16px] [&::-webkit-slider-thumb]:appearance-none [&::-webkit-slider-thumb]:rounded-full [&::-webkit-slider-thumb]:bg-[#a3a3a3]"
        />
        <IB label="Zoom in"><Icon w={8} h={10} c="text-white"><path strokeWidth="2" d="M0 5h8M4 1v8" /></Icon></IB>
        <span className="ml-[17px] w-[32px] text-right">100%</span>
      </div>
    </footer>
  );
}

export default function App() {
  return (
    <div className={`flex h-screen flex-col overflow-hidden bg-[#1c1c1c] ${UI}`}>
      <TitleBar />
      <Tabs />
      <Ribbon />
      <FormulaBar />
      <Sheet />
      <SheetTabs />
      <StatusBar />
    </div>
  );
}
